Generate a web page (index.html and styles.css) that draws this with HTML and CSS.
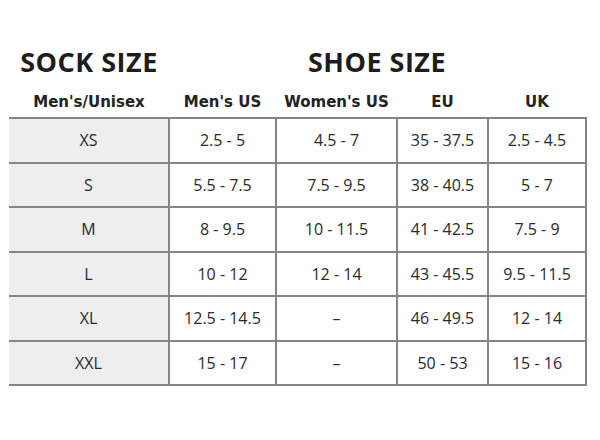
FILE: index.html
```html
<!DOCTYPE html>
<html>
<head>
<meta charset="utf-8">
<link rel="stylesheet" href="styles.css">
</head>
<body>
<div class="chart">
  <div class="titles">
    <h1 class="title sock">SOCK SIZE</h1>
    <h1 class="title shoe">SHOE SIZE</h1>
  </div>
  <table class="sizes">
    <colgroup>
      <col class="c1"><col class="c2"><col class="c3"><col class="c4"><col class="c5">
    </colgroup>
    <thead>
      <tr><th>Men's/Unisex</th><th>Men's US</th><th>Women's US</th><th>EU</th><th>UK</th></tr>
    </thead>
    <tbody>
      <tr><td>XS</td><td>2.5 - 5</td><td>4.5 - 7</td><td>35 - 37.5</td><td>2.5 - 4.5</td></tr>
      <tr><td>S</td><td>5.5 - 7.5</td><td>7.5 - 9.5</td><td>38 - 40.5</td><td>5 - 7</td></tr>
      <tr><td>M</td><td>8 - 9.5</td><td>10 - 11.5</td><td>41 - 42.5</td><td>7.5 - 9</td></tr>
      <tr><td>L</td><td>10 - 12</td><td>12 - 14</td><td>43 - 45.5</td><td>9.5 - 11.5</td></tr>
      <tr><td>XL</td><td>12.5 - 14.5</td><td>–</td><td>46 - 49.5</td><td>12 - 14</td></tr>
      <tr><td>XXL</td><td>15 - 17</td><td>–</td><td>50 - 53</td><td>15 - 16</td></tr>
    </tbody>
  </table>
</div>
</body>
</html>
```
FILE: styles.css
```css
html, body {
  margin: 0;
  padding: 0;
  background: #ffffff;
}
body {
  font-family: "Open Sans", "DejaVu Sans", sans-serif;
  color: #222;
}
.chart {
  padding: 44px 0 0 9px;
  width: 577px;
}
.titles {
  display: flex;
  height: 39px;
}
.title {
  margin: 0;
  font-size: 27px;
  letter-spacing: 0.5px;
  font-weight: 700;
  line-height: 36px;
  color: #1f1d1c;
  text-align: center;
}
.sock { width: 160px; }
.shoe { width: 416px; }
.sizes {
  border-collapse: collapse;
  table-layout: fixed;
  width: 577px;
}
.c1 { width: 160px; }
.c2 { width: 107px; }
.c3 { width: 121px; }
.c4 { width: 91px; }
.c5 { width: 98px; }
.sizes th {
  font-family: "DejaVu Sans", "Open Sans", sans-serif;
  font-size: 15px;
  font-weight: 700;
  color: #222;
  height: 31px;
  padding: 3px 0 0;
  text-align: center;
  vertical-align: middle;
}
.sizes td {
  border: 2px solid #858585;
  height: 42.5px;
  padding: 0;
  text-align: center;
  vertical-align: middle;
  font-size: 16px;
  color: #2a2a2a;
}
.sizes td:first-child {
  border-left: none;
  background: #eeeeee;
}
```
